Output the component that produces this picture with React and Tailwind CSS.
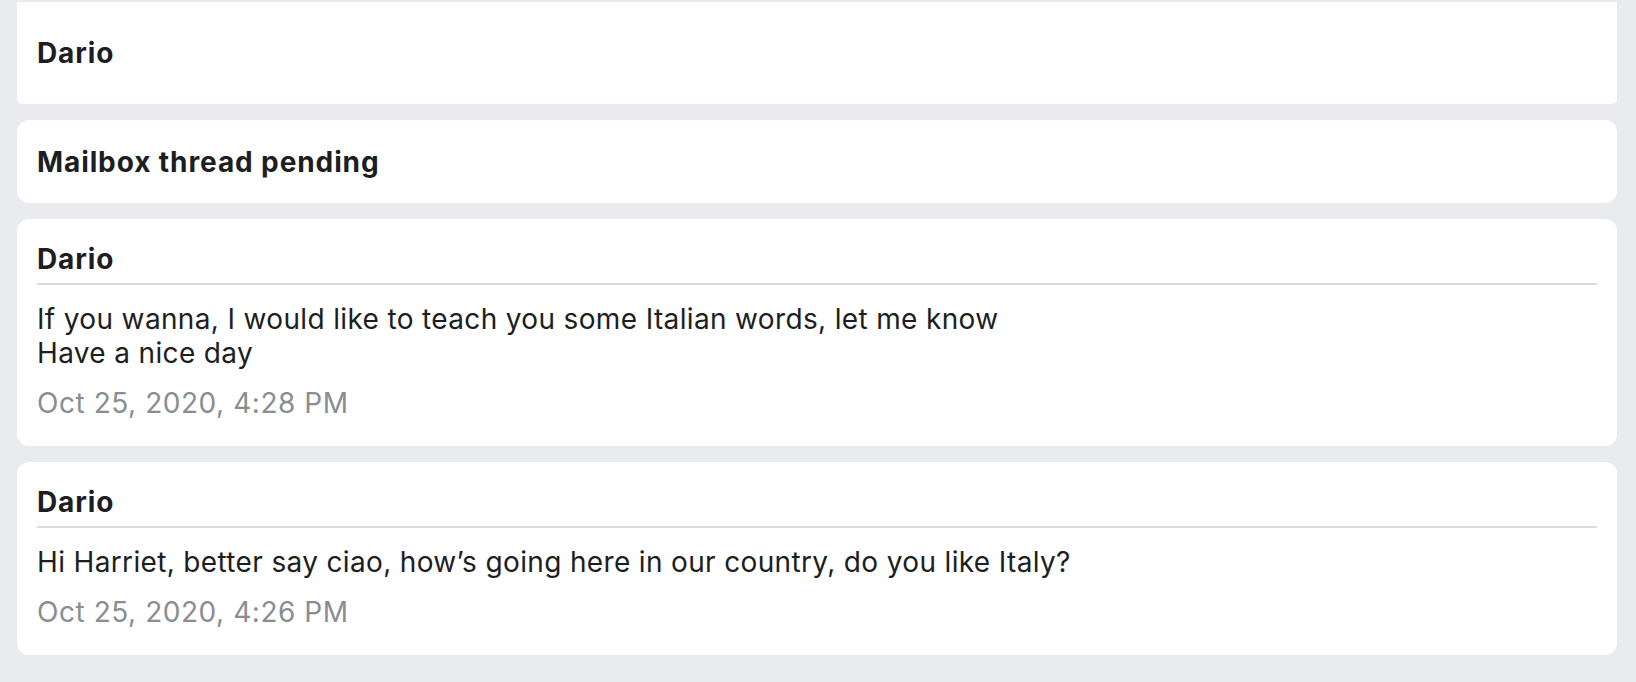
import React from 'react';

const messages = [
  {
    id: 1,
    author: 'Dario',
    lines: ['If you wanna, I would like to teach you some Italian words, let me know', 'Have a nice day'],
    time: 'Oct 25, 2020, 4:28 PM',
  },
  {
    id: 2,
    author: 'Dario',
    lines: ['Hi Harriet, better say ciao, how\u2019s going here in our country, do you like Italy?'],
    time: 'Oct 25, 2020, 4:26 PM',
  },
];

function MessageCard({ message }) {
  return (
    <div className="bg-white rounded-[12px] px-5 pt-[23px] pb-[26px]">
      <div className="text-[28px] leading-[34px] font-bold tracking-[0.9px] text-[#1c1e21] pb-[7px] border-b-2 border-[#dadde1]">
        {message.author}
      </div>
      <div className="mt-[17px] text-[28px] leading-[34px] tracking-[0.35px] text-[#1c1e21]">
        {message.lines.map((line, i) => (
          <div key={i}>{line}</div>
        ))}
      </div>
      <div className="mt-4 text-[28px] leading-[34px] tracking-[0.55px] text-[#8a8d91]">{message.time}</div>
    </div>
  );
}

export default function App() {
  return (
    <div
      className="min-h-screen bg-[#e9ebee] pl-[17px] pr-[19px] pt-[2px] pb-6"
      style={{ fontFamily: 'Inter, "Noto Sans", sans-serif' }}
    >
      <div className="flex flex-col gap-4">
        <div className="bg-white rounded-b-[5px] h-[102px] px-5 flex items-center">
          <span className="text-[28px] font-bold tracking-[0.9px] text-[#1c1e21]">Dario</span>
        </div>
        <div className="bg-white rounded-[12px] h-[83px] px-5 flex items-center">
          <span className="text-[28px] font-bold tracking-[0.9px] text-[#1c1e21]">Mailbox thread pending</span>
        </div>
        {messages.map((m) => (
          <MessageCard key={m.id} message={m} />
        ))}
      </div>
    </div>
  );
}
